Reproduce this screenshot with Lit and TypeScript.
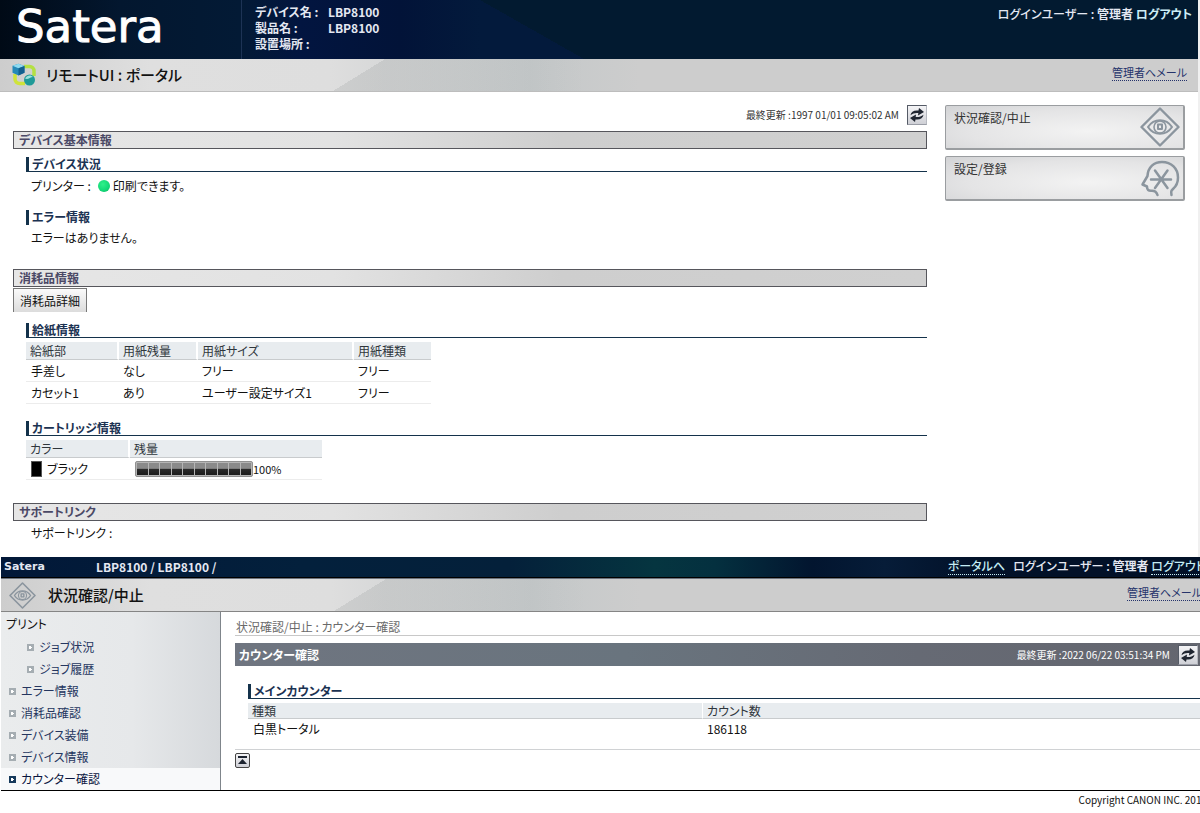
import { LitElement, html, css, svg, nothing } from "lit";
import { customElement, property } from "lit/decorators.js";

const refreshIcon = html`<svg viewBox="0 0 16 16" width="16" height="16" aria-hidden="true">
  <path d="M1.500 8.200C2 4.800 5 3 9.500 3.600L10 1l5 4-6 3.400.3-2.400C6.500 5.600 4 6.200 1.500 8.200Z" fill="#1f2530" />
  <path d="M14.500 7.800c-.5 3.400-3.500 5.200-8 4.600L6 15l-5-4 6-3.400-.3 2.400c2.800.4 5.300-.2 7.800-2.200Z" fill="#1f2530" />
</svg>`;

const eyeShape = svg`<g fill="none" stroke="#8b959e" stroke-linejoin="round">
  <path d="M20 1.500 38.500 20 20 38.500 1.500 20Z" stroke-width="2.400" />
  <path d="M8 20c3-4.600 7.400-6.800 12-6.800S29 15.400 32 20c-3 4.600-7.400 6.800-12 6.800S11 24.600 8 20Z" stroke-width="2" />
  <circle cx="20" cy="20" r="6" stroke-width="1.600" />
  <rect x="18" y="17.500" width="4" height="4.500" stroke-width="2" />
</g>`;

const headShape = svg`<g fill="none" stroke="#8b959e" stroke-linecap="round" stroke-linejoin="round">
  <path d="M17.500 37c-1-3.500-2.500-4.500-6-4.300-3 .2-4.500-.7-4.500-4.200L2.500 26.500 7.500 18C8 9 14 4 22 4c9.500 0 16 6.500 16 15.500 0 5-1.500 8.500-5 11.500-2 1.700-2 2.500-1.500 6" stroke-width="2.500" />
  <path d="M11 21.500h20M15 12.500 27.500 30M27.500 12.500 15 30" stroke-width="2.500" />
</g>`;

const shared = css`
  * { box-sizing: border-box; }
  h1, h2, h3, p, ul, dl, dd { margin: 0; padding: 0; }
  ul { list-style: none; }
  a { color: #25336b; text-decoration: none; }
  button { font: inherit; color: inherit; margin: 0; padding: 0; }
  .dotted { border-bottom: 1px dotted currentColor; }
  .icon-button {
    display: flex; align-items: center; justify-content: center;
    width: 20px; height: 20px;
    border: 1px solid #555b66;
    border-right-color: #b6b9c0; border-bottom-color: #9a9da6;
    background: linear-gradient(#f4f4f6, #cfd0d6);
  }
  .updated { display: flex; align-items: center; justify-content: flex-end; gap: 8px; font-size: 10px; line-height: 20px; }
  .mail { margin-bottom: 5px; font-size: 11px; line-height: 15px; }
  .titlebar {
    display: flex; align-items: center;
    background:
      linear-gradient(to bottom right, transparent 50%, rgba(120, 126, 126, .16) 50%) 333px 0 / 52px 100% no-repeat,
      linear-gradient(90deg, rgba(120, 126, 126, .16), transparent) 385px 0 / 200px 100% no-repeat,
      linear-gradient(90deg, #cdcdcd, #dfdfdf 150px, #dedede 330px, #c4c8c9 530px, #cdcdcd 640px);
  }
  .titlebar h1 { flex: 1; font-size: 15px; line-height: 20px; font-weight: 500; color: #111; }
  .subhead {
    height: 15px; padding-left: 3px;
    border-left: 3px solid #14324b;
    color: #1b3252; font-size: 12px; font-weight: 700; line-height: 14px;
  }
  .ruled { border-bottom: 1px solid #14324b; }
  table { border-collapse: separate; border-spacing: 0; table-layout: fixed; }
  th, td { text-align: left; font-weight: 400; white-space: nowrap; padding: 0 4px; }
  th { height: 18px; line-height: 14px; color: #2f363c; background: #e8ecef; background-clip: padding-box;
    border-bottom: 1px solid #c8cbcd; border-right: 2px solid #fff; }
  th:last-child { border-right: 0; }
  td { height: 22px; line-height: 18px; border-bottom: 1px solid #ececec; }
  td:first-child { padding-left: 5px; }
`;

@customElement("portal-screen")
class PortalScreen extends LitElement {
  static styles = [shared, css`
    :host { display: block; border-right: 2px solid #f0f0f0; }
    .masthead {
      display: grid; grid-template-columns: 241px 1fr auto; height: 59px; color: #e4e8f2; font-weight: 700;
      background:
        linear-gradient(to top right, #031a3c 50%, #021a30 50%) 480px 0 / 104px 59px no-repeat,
        linear-gradient(90deg, #000a16, #03172f 120px, #031a35 240px, #021540 300px, #021338 400px, #031a3c 480px, #021a30 480px);
    }
    .logo { padding-left: 16px; font: 400 45px/54px "DejaVu Sans", sans-serif; -webkit-text-stroke: 1px #fff; color: #fff; }
    .device { display: grid; grid-template-columns: 73px 1fr; grid-auto-rows: 16px; align-content: start;
      padding: 4px 0 0 13px; border-left: 1px solid #1d3355; line-height: 16px; }
    .account { padding: 5px 6px 0 0; line-height: 18px; white-space: nowrap; font-weight: 500; }
    .account b { font-weight: 700; }
    .account a { color: #cdeef6; font-weight: 700; }
    .titlebar { height: 33px; padding: 0 11px 0 12px; gap: 10px; border-bottom: 1px solid #bdbdbd; }
    .body { display: grid; grid-template-columns: minmax(0, 1fr) 240px; gap: 18px; padding: 13px 13px 15px; }
    .bar {
      height: 18px; padding-left: 5px; border: 1px solid #56565c;
      background: linear-gradient(90deg, #e6e6e6, #e2e2e2 35%, #cecece 60%, #d0d0d0);
      color: #4b4966; font-size: 12px; font-weight: 700; line-height: 16px;
    }
    .updated { margin-bottom: 6px; color: #333; }
    .inner { padding: 8px 0 0 13px; }
    .line { padding-left: 5px; line-height: 18px; }
    .state { display: flex; gap: 7px; padding-top: 5px; margin-bottom: 15px; }
    .state span { display: flex; align-items: center; gap: 3px; }
    .lamp { width: 12px; height: 12px; border-radius: 50%; background: radial-gradient(circle at 40% 35%, #2ff08a, #12d877 60%, #0aa85a); }
    .error { padding-top: 4px; margin-bottom: 22px; }
    .detail {
      display: block; width: 74px; height: 24px; margin-top: 1px;
      border: 1px solid #777; border-width: 1px 1px 0; color: #111;
      background: linear-gradient(#fafafa, #dcdcdc); line-height: 22px;
    }
    .supplies { padding-top: 11px; }
    .paper { width: 405px; margin: 4px 0 17px; }
    .toner { width: 296px; margin: 4px 0 23px; }
    .name, .level { display: flex; align-items: center; }
    .name { gap: 5px; }
    .swatch { width: 11px; height: 16px; background: #000; border: 1px solid #555; }
    .level { padding-left: 1px; font-size: 11px; }
    .gauge { display: flex; gap: 1px; width: 118px; height: 16px; padding: 1px; border: 1px solid #909090; background: #b5b5b5; border-radius: 2px; }
    .gauge i { flex: 1; background: linear-gradient(#8a8a8a 0 45%, #2b2b2b 50%, #1c1c1c); }
    .support { padding-top: 3px; margin-left: 13px; }
    .cards { display: grid; gap: 6px; align-content: start; }
    .card {
      display: flex; justify-content: space-between; align-items: flex-start; height: 45px; padding: 1px 3px 0 8px;
      border: 1px solid #9a9da0; border-right-width: 2px; border-bottom-width: 2px; border-radius: 2px;
      background: radial-gradient(ellipse at 60% 60%, #f3f3f3, #e4e4e5 60%, #d2d3d5); color: #333; line-height: 22px;
    }
  `];

  render() {
    return html`
      <header class="masthead">
        <div class="logo">Satera</div>
        <div class="device">
          <span>デバイス名 :</span><span>LBP8100</span>
          <span>製品名 :</span><span>LBP8100</span>
          <span>設置場所 :</span>
        </div>
        <div class="account">ログインユーザー : <b>管理者</b> <a href="#logout">ログアウト</a></div>
      </header>
      <div class="titlebar">
        <svg viewBox="0 0 24 24" width="24" height="24" aria-hidden="true">
          <path d="M12 3.500h5.500a4.500 4.500 0 0 1 4.500 4.500v5" fill="none" stroke="#b4e043" stroke-width="3.500" />
          <path d="M3 11v5a4.500 4.500 0 0 0 4.500 4.500H13" fill="none" stroke="#cfe33a" stroke-width="3.500" />
          <path d="M.5 2.800 6.500.7l6 2.300v6.800l-6 2.700-6-2.700Z" fill="#2589b8" />
          <path d="M.5 2.800 6.500.7l6 2.300-6 2.300Z" fill="#8fdaf0" />
          <path d="m6.500 5.300 6-2.300v6.800l-6 2.700Z" fill="#12608f" />
          <circle cx="17.500" cy="17" r="5.500" fill="#1f9a98" />
          <path d="M13 15.500c2-3.500 6-4 8-1.500-3 .2-5 3-8 1.500Z" fill="#9be3dc" />
        </svg>
        <h1>リモートUI : ポータル</h1>
        <a class="mail dotted" href="#mail">管理者へメール</a>
      </div>
      <div class="body">
        <main>
          <div class="updated"><span>最終更新 :1997 01/01 09:05:02 AM</span><button class="icon-button" aria-label="更新">${refreshIcon}</button></div>
          <h2 class="bar">デバイス基本情報</h2>
          <div class="inner">
            <h3 class="subhead ruled">デバイス状況</h3>
            <p class="line state">プリンター : <span><i class="lamp"></i>印刷できます。</span></p>
            <h3 class="subhead">エラー情報</h3>
            <p class="line error">エラーはありません。</p>
          </div>
          <h2 class="bar">消耗品情報</h2>
          <button class="detail">消耗品詳細</button>
          <div class="inner supplies">
            <h3 class="subhead ruled">給紙情報</h3>
            <table class="paper">
              <colgroup><col style="width:93px" /><col style="width:79px" /><col style="width:156px" /><col style="width:77px" /></colgroup>
              <thead><tr><th>給紙部</th><th>用紙残量</th><th>用紙サイズ</th><th>用紙種類</th></tr></thead>
              <tbody>
                <tr><td>手差し</td><td>なし</td><td>フリー</td><td>フリー</td></tr>
                <tr><td>カセット1</td><td>あり</td><td>ユーザー設定サイズ1</td><td>フリー</td></tr>
              </tbody>
            </table>
            <h3 class="subhead ruled">カートリッジ情報</h3>
            <table class="toner">
              <colgroup><col style="width:104px" /><col style="width:192px" /></colgroup>
              <thead><tr><th>カラー</th><th>残量</th></tr></thead>
              <tbody><tr>
                <td><div class="name"><i class="swatch"></i>ブラック</div></td>
                <td><div class="level"><div class="gauge">${Array.from({ length: 10 }, () => html`<i></i>`)}</div>100%</div></td>
              </tr></tbody>
            </table>
          </div>
          <h2 class="bar">サポートリンク</h2>
          <p class="line support">サポートリンク :</p>
        </main>
        <nav class="cards">
          <a class="card" href="#status">状況確認/中止<svg viewBox="0 0 40 40" width="40" height="40" aria-hidden="true">${eyeShape}</svg></a>
          <a class="card" href="#settings">設定/登録<svg viewBox="0 0 40 40" width="40" height="40" aria-hidden="true">${headShape}</svg></a>
        </nav>
      </div>`;
  }
}

@customElement("nav-item")
class NavItem extends LitElement {
  @property() label = "";
  @property({ type: Boolean }) nested = false;
  @property({ type: Boolean }) current = false;
  static styles = [shared, css`
    :host { display: block; }
    :host([current]) { background: #f8f9fa; }
    a { display: flex; align-items: center; gap: 5px; height: 22px; padding-left: 8px; color: #25365f; }
    :host([nested]) a { padding-left: 26px; }
    :host([current]) a { color: #0a1540; }
  `];
  render() {
    const frame = this.current ? "#173a5c" : "#a5adb2";
    return html`<a href="#${this.label}" aria-current=${this.current ? "page" : nothing}>
      <svg viewBox="0 0 7 7" width="7" height="7" aria-hidden="true">
        <rect width="7" height="7" fill=${frame} /><path d="M2 2h2v1h1v1H4v1H2Z" fill="#fff" />
      </svg>${this.label}</a>`;
  }
}

@customElement("counter-screen")
class CounterScreen extends LitElement {
  static styles = [shared, css`
    :host { display: block; padding-left: 1px; margin-right: -12px; }
    .masthead {
      display: flex; align-items: center; height: 22px; padding: 0 3px 2px; color: #e4e8f2; font-weight: 700;
      border-bottom: 1px solid #6b727c; box-shadow: inset 0 -1px #000; white-space: nowrap;
      background: linear-gradient(90deg, #021838, #03203c 25%, #04203a 42%, #053540 54%, #04303f 59%, #02152f 67%, #061c38 73%, #021128 81%);
    }
    .brand { width: 92px; font: 700 11px/18px "DejaVu Sans", sans-serif; }
    .path { flex: 1; }
    .account { display: flex; gap: 8px; padding-right: 4px; font-weight: 500; line-height: 16px; }
    .account a { color: #c4ecf4; }
    .account b { font-weight: 700; }
    .titlebar { height: 33px; padding: 0 10px 0 8px; gap: 12px; border-bottom: 1px solid #858585; }
    .frame { display: grid; grid-template-columns: 220px minmax(0, 1fr); border-bottom: 1px solid #000; }
    .side { border-right: 1px solid #7f858b; background: linear-gradient(90deg, #eaeced, #e6e8ea 60%, #d6d9dc); }
    .group { padding: 2px 0 2px 5px; line-height: 20px; color: #111; }
    .content { padding: 7px 0 0 14px; }
    .crumb { padding-left: 1px; color: #6a6a6a; line-height: 16px; border-bottom: 1px solid #c8c8c8; }
    .bar { display: flex; align-items: center; justify-content: space-between; height: 23px; margin-top: 7px; padding: 0 14px 0 4px;
      color: #fff; background: linear-gradient(90deg, #6f7580, #69747e 40%, #666a74 70%, #64666f); }
    .bar h2 { font-size: 12px; line-height: 18px; font-weight: 700; }
    .updated { color: #fff; }
    .updated .icon-button { color: #222; }
    .group-body { padding: 18px 0 10px 13px; border-bottom: 1px solid #d0d2d4; }
    .counter { width: 100%; margin-top: 4px; }
    .counter th { height: 16px; line-height: 13px; }
    .counter th:first-child { width: 455px; border-right-width: 1px; }
    .counter td { height: 20px; border-bottom: 0; }
    .top { width: 15px; height: 15px; margin: 3px 0 0; border-radius: 2px; border-color: #444; }
    footer { padding-right: 5px; line-height: 18px; font-size: 10px; text-align: right; color: #111; }
  `];

  render() {
    return html`
      <header class="masthead">
        <span class="brand">Satera</span>
        <span class="path">LBP8100 / LBP8100 /</span>
        <div class="account"><a class="dotted" href="#portal">ポータルへ</a><span>ログインユーザー : <b>管理者</b> <a class="dotted" href="#logout">ログアウト</a></span></div>
      </header>
      <div class="titlebar">
        <svg viewBox="0 0 40 40" width="27" height="27" aria-hidden="true">${eyeShape}</svg>
        <h1>状況確認/中止</h1>
        <a class="mail dotted" href="#mail">管理者へメール</a>
      </div>
      <div class="frame">
        <nav class="side">
          <p class="group">プリント</p>
          <nav-item nested label="ジョブ状況"></nav-item>
          <nav-item nested label="ジョブ履歴"></nav-item>
          <nav-item label="エラー情報"></nav-item>
          <nav-item label="消耗品確認"></nav-item>
          <nav-item label="デバイス装備"></nav-item>
          <nav-item label="デバイス情報"></nav-item>
          <nav-item current label="カウンター確認"></nav-item>
        </nav>
        <main class="content">
          <p class="crumb">状況確認/中止 : カウンター確認</p>
          <div class="bar">
            <h2>カウンター確認</h2>
            <div class="updated"><span>最終更新 :2022 06/22 03:51:34 PM</span><button class="icon-button" aria-label="更新">${refreshIcon}</button></div>
          </div>
          <div class="group-body">
            <h3 class="subhead ruled">メインカウンター</h3>
            <table class="counter">
              <thead><tr><th>種類</th><th>カウント数</th></tr></thead>
              <tbody><tr><td>白黒トータル</td><td>186118</td></tr></tbody>
            </table>
          </div>
          <button class="icon-button top" aria-label="ページの先頭へ">
            <svg viewBox="0 0 9 9" width="9" height="9" aria-hidden="true"><path d="M0 0h9v2H0ZM4.500 3 9 8H0Z" fill="#1d2430" /></svg>
          </button>
        </main>
      </div>
      <footer>Copyright CANON INC. 2010</footer>`;
  }
}

@customElement("app-root")
class AppRoot extends LitElement {
  static styles = css`
    :host {
      display: block; overflow: hidden; background: #fff; color: #111;
      font: 12px/18px "Noto Sans CJK JP", "Liberation Sans", sans-serif;
      font-feature-settings: "palt";
    }
  `;
  render() {
    return html`<portal-screen></portal-screen><counter-screen></counter-screen>`;
  }
}
